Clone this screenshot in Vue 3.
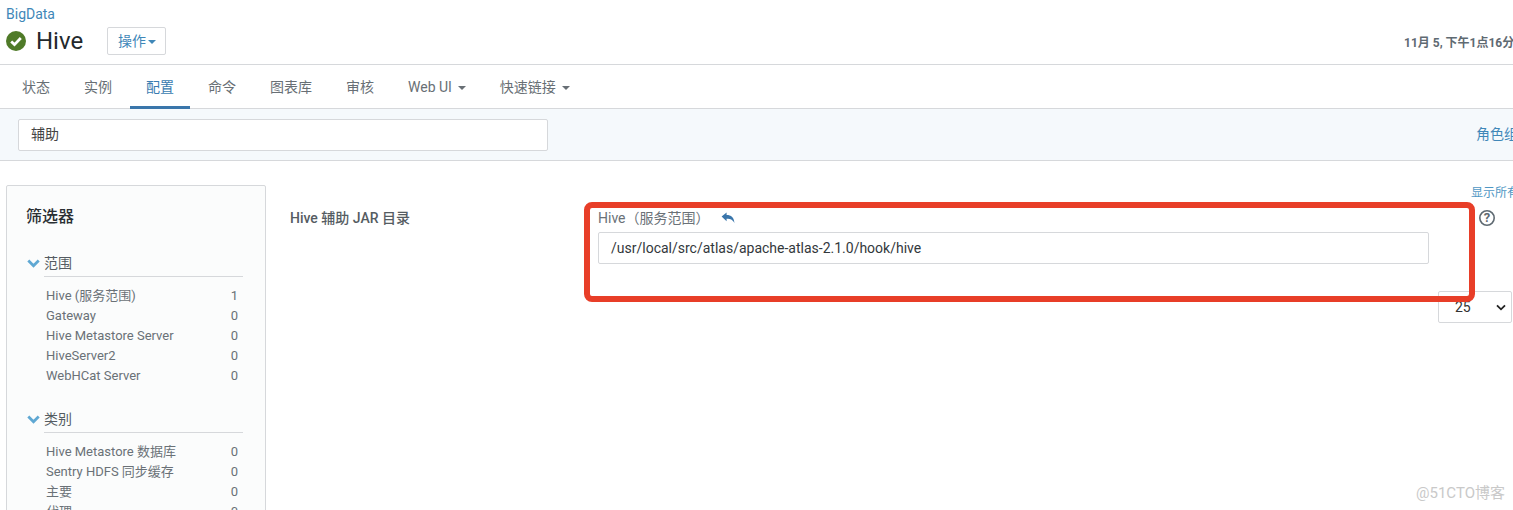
<script setup>
const tabs = [
  { label: '状态' },
  { label: '实例' },
  { label: '配置', active: true },
  { label: '命令' },
  { label: '图表库' },
  { label: '审核' },
  { label: 'Web UI', caret: true },
  { label: '快速链接', caret: true }
]
const groups = [
  {
    title: '范围',
    items: [
      ['Hive (服务范围)', 1],
      ['Gateway', 0],
      ['Hive Metastore Server', 0],
      ['HiveServer2', 0],
      ['WebHCat Server', 0]
    ]
  },
  {
    title: '类别',
    items: [
      ['Hive Metastore 数据库', 0],
      ['Sentry HDFS 同步缓存', 0],
      ['主要', 0],
      ['代理', 0]
    ]
  }
]
</script>

<template>
  <div class="page">
    <header class="head">
      <div class="titles">
        <a class="crumb">BigData</a>
        <div class="title-row">
          <svg class="ok" viewBox="0 0 20 20" width="20" height="20">
            <circle cx="10" cy="10" r="10" fill="#4f7a28" />
            <path d="M5.2 10.4l3.3 3.2 6.3-6.6" fill="none" stroke="#fff" stroke-width="2.8" />
          </svg>
          <h1>Hive</h1>
          <button class="act">操作<i class="caret"></i></button>
        </div>
      </div>
      <div class="time">11月 5, 下午1点16分</div>
    </header>

    <nav class="tabs">
      <a v-for="t in tabs" :key="t.label" class="tab" :class="{ active: t.active }">
        {{ t.label }}<i v-if="t.caret" class="caret"></i>
      </a>
    </nav>

    <div class="band">
      <div class="search">辅助</div>
      <a class="role">角色组</a>
    </div>

    <main class="main">
      <aside class="panel">
        <h2>筛选器</h2>
        <section v-for="g in groups" :key="g.title" class="group">
          <div class="group-title">
            <svg viewBox="0 0 13 9" width="13" height="9">
              <path d="M1.3 1.6l5.200 5.200 5.200-5.200" fill="none" stroke="#5fa8d3" stroke-width="2.8" />
            </svg>
            <span>{{ g.title }}</span>
          </div>
          <div v-for="it in g.items" :key="it[0]" class="item">
            <span>{{ it[0] }}</span><span>{{ it[1] }}</span>
          </div>
        </section>
      </aside>

      <div class="content">
        <a class="show-all">显示所有描述</a>
        <div class="row">
          <div class="label">Hive 辅助 JAR 目录</div>
          <div class="value">
            <div class="scope">
              <span>Hive（服务范围）</span>
              <svg viewBox="0 0 14 12" width="14" height="12">
                <path d="M.6 4.600L5.600.6v2.500c4.500 0 7.600 2.300 7.800 8.200-1.300-3.300-3.600-4.500-7.800-4.500v2.400z" fill="#3a76ab" />
              </svg>
            </div>
            <div class="field">/usr/local/src/atlas/apache-atlas-2.1.0/hook/hive</div>
          </div>
          <svg class="help" viewBox="0 0 16 16" width="16" height="16">
            <circle cx="8" cy="8" r="7.200" fill="none" stroke="#5f6a72" stroke-width="1.600" />
            <text x="8" y="12.400" text-anchor="middle" class="q">?</text>
          </svg>
        </div>
        <div class="pager">
          <div class="select"><span>25</span>
            <svg viewBox="0 0 10 7" width="10" height="7">
              <path d="M1 1.300l4 4 4-4" fill="none" stroke="#222" stroke-width="1.800" />
            </svg>
          </div>
        </div>
      </div>
    </main>

    <div class="annot"></div>
    <div class="mark">@51CTO博客</div>
  </div>
</template>

<style>
html, body { margin: 0; overflow: hidden; background: #fff; }
</style>

<style scoped>
.page {
  position: relative;
  width: 1513px;
  height: 510px;
  overflow: hidden;
  background: #fff;
  font-family: Roboto, "Noto Sans CJK SC", sans-serif;
  font-size: 14px;
  color: #5f6a72;
}
a { color: #337ab7; }
.head {
  height: 65px;
  box-sizing: border-box;
  padding: 6px 0 0 6px;
  display: flex;
  justify-content: space-between;
  border-bottom: 1px solid #d6d8db;
}
.crumb { display: block; font-size: 14px; line-height: 16px; color: #3f87b8; }
.title-row { display: flex; align-items: center; margin-top: 5px; height: 28px; }
.ok { margin-right: 10px; }
h1 { margin: 0; font-size: 24px; font-weight: 400; color: #23282c; line-height: 28px; width: 71px; }
.act {
  width: 59px;
  height: 28px;
  padding: 0 0 2px 1px;
  background: #fff;
  border: 1px solid #d6d8db;
  border-radius: 2px;
  color: #3f87b8;
  font: 14px Roboto, "Noto Sans CJK SC", sans-serif;
}
.caret {
  display: inline-block;
  width: 0;
  height: 0;
  margin-left: 3px;
  vertical-align: 2px;
  border-left: 4px solid transparent;
  border-right: 4px solid transparent;
  border-top: 4px solid currentColor;
}
.act .caret { margin-left: 2px; }
.time { margin-top: 30px; font-size: 12px; line-height: 14px; font-weight: 700; white-space: nowrap; width: 109px; flex: none; overflow: hidden; }
.tabs {
  height: 43px;
  display: flex;
  padding-left: 6px;
  gap: 2px;
  border-bottom: 1px solid #d6d8db;
}
.tab {
  padding: 0 16px;
  line-height: 45px;
  color: #686f75;
  white-space: nowrap;
  box-sizing: border-box;
  height: 44px;
}
.tab .caret { margin-left: 6px; }
.tab.active { color: #3a7cb0; border-bottom: 3px solid #3a76ab; }
.band {
  height: 52px;
  box-sizing: border-box;
  padding: 10px 0 0 18px;
  background: #f5f9fc;
  border-bottom: 1px solid #d6d8db;
  display: flex;
  justify-content: space-between;
}
.search {
  width: 530px;
  height: 32px;
  box-sizing: border-box;
  padding-left: 12px;
  line-height: 29px;
  background: #fff;
  border: 1px solid #d6d8db;
  border-radius: 2px;
  color: #444;
}
.role { width: 37px; overflow: hidden; white-space: nowrap; line-height: 31px; color: #3f87b8; }
.main { display: flex; padding: 24px 0 0 6px; }
.panel {
  width: 260px;
  height: 400px;
  flex: none;
  box-sizing: border-box;
  padding: 0 22px 0 19px;
  background: #fbfcfc;
  border: 1px solid #d6d8db;
  border-radius: 2px;
}
h2 { margin: 20px 0 0; font-size: 16px; line-height: 22px; font-weight: 500; color: #2a2f33; }
.group { margin-top: 22px; }
.group + .group { margin-top: 20px; }
.group-title {
  display: flex;
  align-items: center;
  height: 27px;
  gap: 4px;
  margin-bottom: 9px;
  margin-left: 1px;
  color: #555c62;
}
.group-title span {
  flex: 1;
  line-height: 26px;
  border-bottom: 1px solid #d6d8db;
}
.item {
  display: flex;
  justify-content: space-between;
  height: 20px;
  line-height: 20px;
  padding: 0 5px 0 20px;
  font-size: 13px;
  color: #6a7177;
}
.content { position: relative; flex: 1; margin-left: 24px; min-width: 0; }
.show-all {
  position: absolute;
  left: 1181px;
  top: 1px;
  font-size: 12px;
  line-height: 14px;
  white-space: nowrap;
  color: #4f97c4;
}
.row { display: flex; padding-top: 25px; align-items: flex-start; }
.label { width: 308px; flex: none; font-weight: 500; line-height: 16px; color: #555c62; }
.value { width: 831px; flex: none; }
.scope { display: flex; align-items: center; gap: 11px; height: 16px; line-height: 16px; color: #6a7177; }
.field {
  margin-top: 6px;
  height: 32px;
  box-sizing: border-box;
  padding-left: 12px;
  line-height: 30px;
  border: 1px solid #d6d8db;
  border-radius: 2px;
  color: #33383c;
}
.help { margin: 0 0 0 50px; flex: none; }
.q { font: 700 13px Roboto, sans-serif; fill: #5f6a72; }
.pager { display: flex; margin: 27px 0 0 1148px; }
.select {
  width: 74px;
  height: 32px;
  flex: none;
  box-sizing: border-box;
  padding: 0 5px 0 16px;
  border: 1px solid #d6d8db;
  border-radius: 2px;
  display: flex;
  align-items: center;
  justify-content: space-between;
  color: #333;
}
.annot {
  position: absolute;
  left: 584px;
  top: 202px;
  width: 891px;
  height: 100px;
  box-sizing: border-box;
  border: 6px solid #e83e28;
  border-radius: 8px;
}
.mark {
  position: absolute;
  left: 1416px;
  top: 484px;
  font-size: 15px;
  line-height: 18px;
  color: #c9c9c9;
}
</style>
